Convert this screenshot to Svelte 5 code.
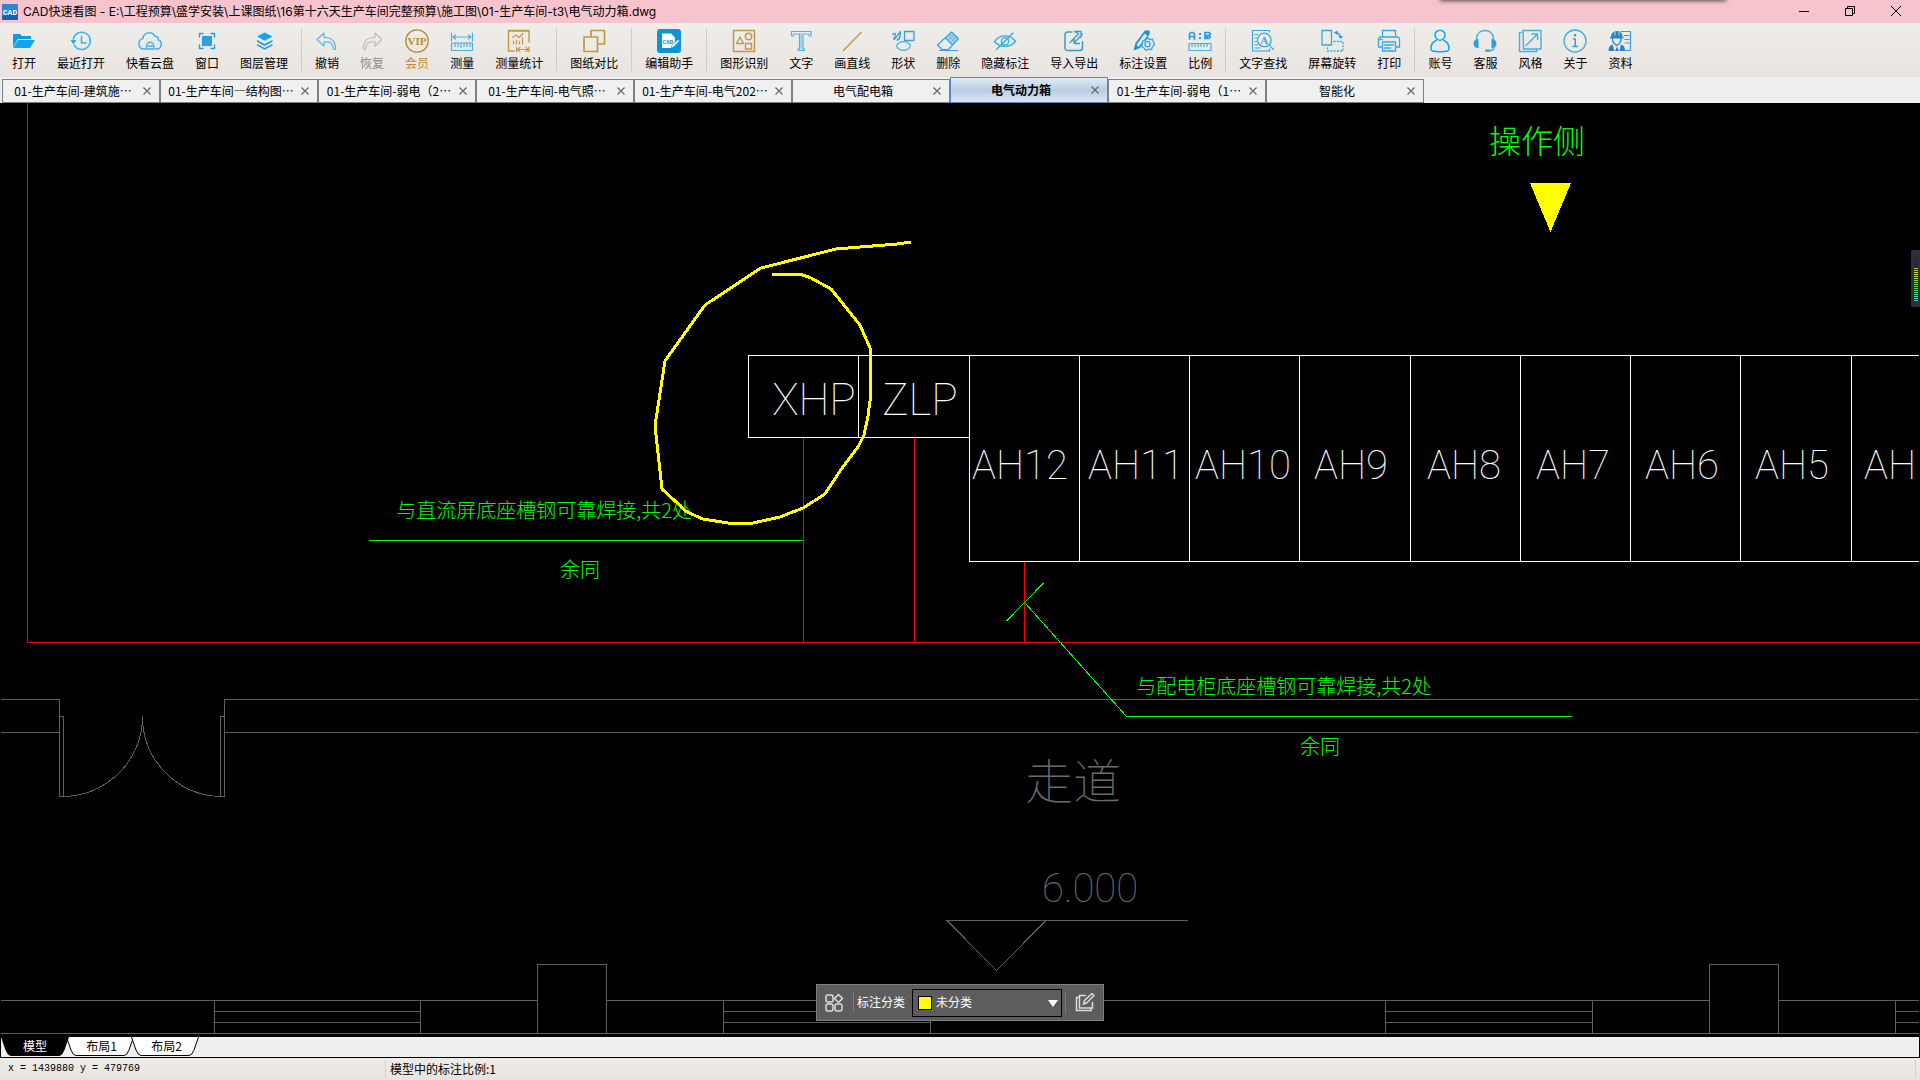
<script>
  const B = '#29abe2';
  const G = '#bf9a45';
  const stroke = (c, w, d) => `<path d="${d}" fill="none" stroke="${c}" stroke-width="${w}" stroke-linejoin="round" stroke-linecap="round"/>`;

  const icons = {
    open: `<path d="M1 5h7l2 2h9v3H6l-5 8z" fill="#0e9be0"/><path d="M6 11h17l-5 8H1z" fill="#12a5ee"/>`,
    recent: stroke('#3fb4ea', 1.6, 'M5.2 16.2A8.6 8.6 0 1 0 4.300 10') + stroke('#3fb4ea', 1.6, 'M12.500 7.500v6.500h4.500') + `<path d="M1.500 11h6l-3 4.500z" fill="${B}"/>`,
    cloud: stroke('#3db2ec', 1.5, 'M7.500 20H6a5.300 5.300 0 0 1-1.200-10.400C5 6 8 3.500 11.500 3.800c2.500.1 4.500 1.400 5.500 3.500 2 0 3.300 1.500 3.300 3.500 2 .7 3 2.200 3 4.200 0 3-2 5-4.500 5h-1.500') + stroke('#3db2ec', 1.4, 'M8.500 20v-3a3.700 3.700 0 0 1 7.400 0v3zM10 17h4.500'),
    window: stroke('#1ba3ea', 1.4, 'M4.500 8V4.500H8M16 4.500h3.500V8M19.500 16v3.500H16M8 19.500H4.500V16') + `<path d="M7.500 7.500h9v9h-9z" fill="#3a9fd6" stroke="#12a5ee"/>`,
    layers: `<path d="M12.500 3.500l8 4-8 4.300-7.500-4.300z" fill="#12a5ee"/><path d="M5 11l7.500 4 8-4v1.800l-8 4.200L5 12.800zM5 15l7.500 4 8-4v1.500l-8 4.200L5 16.500z" fill="#1b9ade"/>`,
    undo: stroke('#58b8e6', 1.200, 'M9 4L2 10.500 9 17v-4c6-.6 9 1 9.500 7.500h2c.6-8-4-12.300-11.500-12z'),
    redo: stroke('#bdbdbd', 1.200, 'M15 4l7 6.500L15 17v-4c-6-.6-9 1-9.500 7.500h-2C3 12.500 7.500 8.200 15 8.500z'),
    vip: `<circle cx="12" cy="12" r="11.200" fill="none" stroke="#b4893a" stroke-width="1.300"/><text x="12" y="16" text-anchor="middle" font-family="Liberation Serif, serif" font-size="11" font-weight="bold" fill="#c08a20">VIP</text>`,
    measure: stroke('#45b0e2', 1.200, 'M1.500 4v8M22.500 4v8M3 8h18M5.500 6L3 8l2.500 2M18.500 6L21 8l-2.500 2M1.500 14h21v7.500h-21zM5 14.500v3M8 14.500v3M11 14.500v4M14 14.500v3M17 14.500v3M20 14.500v3'),
    stats: stroke(G, 1.400, 'M22 13V1.500H1.500v20.500H7M22 2H1.500') + stroke(G, 1.200, 'M5.500 8.500l3.500-2.500 3 2.500 4-4M6.500 12v3M9.500 11v4M12.500 12v3M15.500 8.500V15M9.500 18v5M22 18v5M10.500 20.500h11M13 18.500l-2.500 2 2.500 2M19 18.500l2.500 2-2.500 2'),
    compare: stroke(G, 1.700, 'M9 8V1.500h13.500V15H16M2 8h13.500v14.500H2z'),
    assist: `<rect width="24" height="24" rx="3" fill="#0c93dc"/><path d="M5 4.500h9l4 4v4l-3 6.500H5z" fill="#fff"/><text x="10.800" y="14.500" text-anchor="middle" font-family="Liberation Mono, monospace" font-size="6" font-weight="bold" fill="#0c93dc">CAD</text><path d="M21 10.500l1.500 1.500-6 6-2.500 1 .9-2.500z" fill="#fff" stroke="#0c93dc" stroke-width=".6"/>`,
    shapesearch: stroke(G, 1.500, 'M1.500 1.500h21v21h-21z') + stroke(G, 1.400, 'M8 8l3.500 6.500h-7zM13.500 14.500h6v5.500h-6z') + `<circle cx="16.500" cy="7.500" r="3.200" fill="none" stroke="${G}" stroke-width="1.400"/>`,
    text: stroke('#4ab4e6', 1.200, 'M2.500 2.500h19.500v4.500h-1.500l-1-2h-5.500v15h1.500v1.500H9v-1.500h1.500V5H5L4 7H2.500z') + stroke('#8fd0ee', 1.600, 'M12.200 4.500v15'),
    line: stroke(G, 1.400, 'M3.500 21.500L21 3.500'),
    shapes: stroke('#3a9fd6', 1.300, 'M1.500 5.500C5 3 5 5 3.500 8s-.5 3.500 1.500.5L9 3M6 11c2 0 2.500-1 3-3.500l.5-5M13.500 2.500h9.500v9h-9.500z') + `<ellipse cx="12.500" cy="17" rx="6.700" ry="4.300" fill="none" stroke="#45b0e2" stroke-width="1.300"/>`,
    erase: `<path d="M15.500 3L22.500 9.500 17 16 9.500 9z" fill="#a9d6ec"/>` + stroke('#2fa6e2', 1.200, 'M15.500 3l7 6.500L12.500 20.500H6L1.500 16zM9.500 9l7 7M3.500 21.500h18') + stroke('#58b0d8', 0.7, 'M12.500 7l7 6M14 5l7 6M18 5.500l-6.500 6M20 8l-6 6'),
    hide: stroke('#35a8e0', 1.400, 'M1.500 12.500C7 5 17 5 22.500 12.500 17 19 7 19 1.500 12.500zM3.500 20.500L20 4') + `<circle cx="12" cy="12.300" r="3.600" fill="none" stroke="#35a8e0" stroke-width="1.300"/>`,
    exchange: stroke('#3a9ccc', 1.500, 'M10 3H5.500A2.500 2.500 0 0 0 3 5.500V19a2.500 2.500 0 0 0 2.500 2.500H18a2.500 2.500 0 0 0 2.500-2.500v-6.500') + stroke('#3a9ccc', 1.300, 'M8 13.500l8.500-8.500-4-2.500h6.500v6M20.500 5l-8.500 9v-4.500M12.500 14.500h5'),
    setting: `<path d="M14 1.500h4.500v4L9 19l-6.500 2.500L4.500 14z" fill="#1192e0"/><path d="M13.500 4.500l3 2L7.500 18l-2-2z" fill="#dcecf5"/><path d="M16.500 8.500l2 2 3-.2 1 3 1 2.200-2 2-1 3-3-.4-2.500 1.400-2-2.500-2.500-1.500 1-2.500 0-3 3-.4z" fill="#eeecea" stroke="#35a8e0" stroke-width="1.300"/><circle cx="16.500" cy="15.200" r="2.600" fill="none" stroke="#35a8e0" stroke-width="1.300"/>`,
    ratio: stroke('#22a0e6', 1.700, 'M1.500 10V5l1.500-1.500h2L6.500 5v5M1.500 7.500h5M17 3.500h4l1.500 1.300L21 6.500h-4M21 6.500l1.500 1.500L21 9.500h-4zM17 3.500v6') + `<path d="M11 4h2v2h-2zM11 8h2v2h-2z" fill="#22a0e6"/>` + stroke('#45b0e2', 1.200, 'M1 14.500h22v7H1zM4 15v2.500M7 15v2.500M10 15v2.500M13 15v2.500M16 15v2.500M19 15v2.500'),
    find: stroke('#35a8e0', 1.200, 'M18.500 3V1.500h-17v20.500h17V20M4 5.500h2.500M4 9h1.500M4 12.500h1.500M4 16h2.500M4 19h5M18 16l4.500 4.500') + `<circle cx="13.300" cy="11" r="6.800" fill="#eeecea" stroke="#35a8e0" stroke-width="1.300"/><text x="13.300" y="15" text-anchor="middle" font-family="Liberation Serif, serif" font-size="11" font-weight="bold" fill="#45a6d6">A</text>`,
    rotate: stroke('#35a8e0', 1.300, 'M2 1.500h9.500V16H2z') + `<path d="M13.500 12.500h9.500v9.500H7.500v-4" fill="none" stroke="#35a8e0" stroke-width="1.300" stroke-dasharray="2 1.300"/>` + stroke('#35a8e0', 1.300, 'M15 3.500c3 .3 5 1.500 5.500 4.500') + `<path d="M14 3.500l3.500-2v4.500zM18 7h5l-2 3z" fill="#22a0e6"/>`,
    print: stroke('#35a8e0', 1.300, 'M5.500 8V1.500h13V8M5.500 18H1.500V9.500L3 8h18l1.500 1.500V18h-4M5.500 13h13v9h-13zM7.500 16h9M7.500 19h6M3 10.500h2'),
    account: `<circle cx="12" cy="6.200" r="5" fill="none" stroke="#0fa9f5" stroke-width="1.600"/>` + stroke('#0fa9f5', 1.600, 'M8 11.500c-3.500 1.500-5 4.500-5 8 0 2.500 1.500 3.300 9 3.300s9-.8 9-3.300c0-3.500-1.500-6.500-5-8'),
    service: stroke('#45aede', 1.500, 'M3.500 12V9.500C4 4.500 7.500 1.500 12 1.500s8 3 8.500 8V12M21 19c-.5 2-2 2.700-5 2.800') + `<path d="M5.500 10v9.500C2 19 .5 17 .5 14.500S2 10.500 5.500 10zM18.500 10v9.500c3.500-.5 5-2.500 5-5s-1.500-4-5-4.500z" fill="#2d9fdc"/><rect x="12" y="20.500" width="5" height="2.200" rx="1" fill="#2d9fdc"/>`,
    style: stroke('#45aede', 1.400, 'M3 3.500H1.500v19h17V21M5 1.500h18v18.500H5.500zM8 16.500L18.500 6M14 5h5.500v5.500'),
    about: `<circle cx="12" cy="12" r="11" fill="none" stroke="#45aede" stroke-width="1.300"/><circle cx="12" cy="6.300" r="1.200" fill="#2d9fdc"/>` + stroke('#2d9fdc', 1.400, 'M10.500 10h1.800v7.500M10 17.500h4.500'),
    docs: stroke('#3f9ada', 1.200, 'M13 2.500h9.500v19H16M16 6.500h5M17 10.500h4M17 14h4') + `<path d="M3 8c0-3.500 2-5.500 5-6h2c3 .5 4.500 2.500 4.500 6z" fill="#1c86d8"/><path d="M2 8h13.500v1.500H2z" fill="#1c86d8"/>` + stroke('#1c86d8', 1.300, 'M4.500 10c0 3.500 1.800 5 4.300 6.500 2.500-1.500 4.200-3 4.200-6.500') + `<path d="M.5 22c0-4 2-6 4-6.500l2 6.500zM9 17.500l2 4.500H7zM17 22c0-4-1.500-6-4-6.500L11.500 22z" fill="#2c7ccc"/><path d="M7 2.500v4M11 2.500v4" stroke="#eeecea" stroke-width=".8"/>`
  };

  const groups = [
    [['open', '打开'], ['recent', '最近打开'], ['cloud', '快看云盘'], ['window', '窗口'], ['layers', '图层管理']],
    [['undo', '撤销'], ['redo', '恢复'], ['vip', '会员'], ['measure', '测量'], ['stats', '测量统计']],
    [['compare', '图纸对比']],
    [['assist', '编辑助手']],
    [['shapesearch', '图形识别'], ['text', '文字'], ['line', '画直线'], ['shapes', '形状'], ['erase', '删除'], ['hide', '隐藏标注'], ['exchange', '导入导出'], ['setting', '标注设置'], ['ratio', '比例']],
    [['find', '文字查找'], ['rotate', '屏幕旋转'], ['print', '打印']],
    [['account', '账号'], ['service', '客服'], ['style', '风格'], ['about', '关于'], ['docs', '资料']]
  ];

  const files = ['01-生产车间-建筑施…', '01-生产车间—结构图…', '01-生产车间-弱电（2…', '01-生产车间-电气照…', '01-生产车间-电气202…', '电气配电箱', '电气动力箱', '01-生产车间-弱电（1…', '智能化'];
  let active = $state(6);

  const layouts = ['模型', '布局1', '布局2'];
  let layout = $state(0);

  const dividers = [1079, 1189, 1299, 1410, 1520, 1630, 1740, 1851];
  const cabinets = [['AH12', 1020], ['AH11', 1136], ['AH10', 1243], ['AH9', 1351], ['AH8', 1464], ['AH7', 1573], ['AH6', 1682], ['AH5', 1792], ['AH', 1890]];
  const openings = [[214, 420], [723, 930], [1385, 1592], [1895, 1919]];
  const levels = Array.from({ length: 23 }, (_, i) => (i < 6 ? '#20232d' : `hsl(${40 + (i - 6) * 8} 65% 55%)`));
</script>

<div class="app" lang="zh-CN">
  <header class="titlebar">
    <svg class="logo" viewBox="0 0 16 16" aria-hidden="true">
      <rect width="16" height="16" rx="1" fill="#1563b4" />
      <path d="M0 0h16v6L0 12z" fill="#2c86d2" />
      <text x="8" y="11" text-anchor="middle" font-family="Liberation Mono, monospace" font-size="8" font-weight="bold" fill="#fff">CAD</text>
    </svg>
    <h1>CAD快速看图 - E:\工程预算\盛学安装\上课图纸\16第十六天生产车间完整预算\施工图\01-生产车间-t3\电气动力箱.dwg</h1>
    <div class="window-buttons">
      <button aria-label="最小化"><svg viewBox="0 0 10 10"><path d="M0 5.500h10" /></svg></button>
      <button aria-label="还原"><svg viewBox="0 0 10 10"><path d="M.5 2.500h7v7h-7zM2.500 2.500v-2h7v7h-2" /></svg></button>
      <button aria-label="关闭"><svg viewBox="0 0 10 10"><path d="M0 0l10 10M10 0L0 10" /></svg></button>
    </div>
    <span class="notch"></span>
  </header>

  <nav class="toolbar">
    {#each groups as group, g}
      {#if g > 0}<span class="sep"></span>{/if}
      {#each group as [name, label]}
        <button class="tool {name}">
          <svg viewBox="0 0 24 24" aria-hidden="true">{@html icons[name]}</svg>
          <span>{label}</span>
        </button>
      {/each}
    {/each}
  </nav>

  <div class="files">
    {#each files as name, i}
      <div class="file" class:active={i === active}>
        <button class="name" onclick={() => (active = i)}>{name}</button>
        <button class="close" aria-label="关闭 {name}"><svg viewBox="0 0 8 8"><path d="M.5.5l7 7M7.500.5l-7 7" /></svg></button>
      </div>
    {/each}
  </div>

  <main class="canvas">
    <svg class="drawing" viewBox="0 103 1920 934" preserveAspectRatio="xMinYMin slice">
      <g class="wall">
        <path d="M1 699.500H59.500V796.500H70M1 732.500H59M60 716.500H63.500V796M1919 699.500H224.500V796.500H215M225 732.500H1919M224 716.500H220.500V796" />
        <path d="M142.500 716A80 80 0 0 1 63.500 796.500M142.500 716A80 80 0 0 0 220.500 796.500" />
        <path d="M1 1000.500H537.500V964.500H606.500V1000.500H1709.500V964.500H1778.500V1000.500H1919M537.500 1000V1033M606.500 1000V1033M1709.500 1000V1033M1778.500 1000V1033M1 1033.500H1919" />
        {#each openings as [a, b]}
          <path d="M{a}.5 1000V1033M{a} 1011.500H{b}M{a} 1022.500H{b}" />
          {#if b < 1919}<path d="M{b}.5 1000V1033" />{/if}
        {/each}
        <path d="M946 920.500H1188M947 920.500L996.500 970.500L1046 920.500" />
      </g>
      <g class="wall-text">
        <text class="room" x="1073" y="799">走道</text>
        <text class="level" x="1090" y="902">6.000</text>
      </g>
      <g class="outline">
        <path d="M1919 355.500H748.500V437.500H969.500M858.500 355V437M969.500 355V561.500H1919" />
        {#each dividers as x}
          <path d="M{x}.5 355V561" />
        {/each}
      </g>
      <g class="cabinet">
        <text class="panel" x="814" y="415">XHP</text>
        <text class="panel" x="920" y="415">ZLP</text>
        {#each cabinets as [label, x]}
          <text {x} y="479">{label}</text>
        {/each}
      </g>
      <path class="earth" d="M27.500 103V642.500H1919M803.500 438V642M914.500 438V642M1024.500 562V642" />
      <path class="leader" d="M369 540.500H803M1043.500 583L1006.500 621M1024.500 602.500L1126.500 716.500H1572" />
      <g class="note">
        <text x="544" y="518">与直流屏底座槽钢可靠焊接,共2处</text>
        <text x="580" y="577">余同</text>
        <text x="1284" y="694">与配电柜底座槽钢可靠焊接,共2处</text>
        <text x="1320" y="754">余同</text>
        <text class="side" x="1537" y="153">操作侧</text>
      </g>
      <path class="marker" d="M1530 183H1571L1550.500 232z" />
      <path class="sketch" d="M911 242L897 244L836 249L761 268L705 305L665 361L655 426L662 489L687 512L703 519L728 523L753 523L780 517L803 508L825 494L840 471L858 447L864 435L868 416L870 401V348L860 325L831 289L811 278L800 274H772" />
    </svg>

    <div class="meter" aria-hidden="true">
      {#each levels as color}<i style:background={color}></i>{/each}
    </div>

    <div class="annotate">
      <button class="grid" aria-label="全部分类">
        <svg viewBox="0 0 20 20"><rect x="2" y="2" width="7" height="7" rx="2" /><path d="M14.500 1.500l4 4-4 4-4-4z" /><rect x="2" y="11" width="7" height="7" rx="2" /><rect x="11" y="11" width="7" height="7" rx="2" /></svg>
      </button>
      <span class="bar"></span>
      <label for="category">标注分类</label>
      <div class="picker">
        <span class="swatch"></span>
        <select id="category"><option>未分类</option></select>
        <span class="arrow"></span>
      </div>
      <span class="bar"></span>
      <button class="edit" aria-label="编辑">
        <svg viewBox="0 0 20 20"><path d="M4 4.500H1.500v13H16V15M11 2.500H4.500V15h13V9M8.500 11l1-3.500 7.500-7 2 2-7.500 7.500z" /></svg>
      </button>
    </div>
  </main>

  <div class="layouts">
    {#each layouts as name, i}
      <button class="layout" class:current={i === layout} onclick={() => (layout = i)}>
        <svg viewBox="0 0 68 19" aria-hidden="true"><path d="M.5 0L5 13Q7 18.500 10 18.500H58Q61 18.500 63 13L67.500 0" /></svg>
        <span>{name}</span>
      </button>
    {/each}
  </div>

  <footer class="status">
    <span class="coords">x = 1439880 y = 479769</span>
    <span class="scale">模型中的标注比例:1</span>
  </footer>
</div>

<style>
  :global(body) { margin: 0; background: #000; }
  .app {
    display: flex;
    flex-direction: column;
    height: 100vh;
    overflow: hidden;
    font-family: "Noto Sans CJK SC", sans-serif;
    font-size: 12px;
    line-height: 14px;
    color: #000;
  }
  button {
    border: 0;
    padding: 0;
    margin: 0;
    background: none;
    font: inherit;
    color: inherit;
  }
  svg { display: block; }

  .titlebar {
    position: relative;
    display: flex;
    align-items: center;
    height: 23px;
    flex: none;
    background: #f7c4cd;
    padding: 0 1px 0 2px;
  }
  .logo { width: 16px; height: 16px; margin-right: 5px; }
  h1 {
    flex: 1;
    margin: 0;
    font-family: Inter, "Noto Sans CJK SC", sans-serif;
    font-size: 12px;
    font-weight: 400;
    white-space: nowrap;
  }
  .window-buttons { display: flex; align-self: stretch; }
  .window-buttons button {
    width: 46px;
    height: 21px;
    display: grid;
    place-items: center;
  }
  .window-buttons svg { width: 10px; height: 10px; fill: none; stroke: #000; overflow: visible; }
  .notch {
    position: absolute;
    top: -4px;
    right: 195px;
    width: 284px;
    height: 4px;
    background: #998;
    box-shadow: 0 0 4px 1px #604850;
  }

  .toolbar {
    display: flex;
    flex: none;
    gap: 1px;
    height: 54px;
    padding-left: 2px;
    background: linear-gradient(#efeeea, #e9e3e0);
  }
  .tool {
    display: flex;
    flex-direction: column;
    align-items: center;
    gap: 3px;
    padding: 6px 10px 0;
    white-space: nowrap;
  }
  .tool svg { width: 24px; height: 24px; }
  .tool.redo { color: #8c8c8c; }
  .tool.vip { color: #bf8c30; }
  .sep { width: 1px; height: 44px; margin: 5px 2px; background: #cdcdcb; }

  .files {
    display: flex;
    align-items: flex-end;
    flex: none;
    height: 26px;
    padding-left: 2px;
    background: #efefef;
  }
  .file {
    display: flex;
    align-items: center;
    box-sizing: border-box;
    width: 158px;
    height: 24px;
    padding: 0 5px 0 3px;
    border: 1px solid #7f7f7f;
    background: #f0f0f0;
  }
  .file.active {
    height: 26px;
    border-color: #5b87bf;
    background: linear-gradient(#e2ebf6, #b9cde4 50%, #dbe6f3);
    font-weight: 700;
  }
  .name { flex: 1; min-width: 0; white-space: nowrap; }
  .close { width: 14px; height: 14px; display: grid; place-items: center; }
  .close svg { width: 8px; height: 8px; fill: none; stroke: #666; stroke-width: 1.200; }

  .canvas {
    position: relative;
    flex: 1;
    min-height: 0;
    background: #000;
    overflow: hidden;
  }
  .drawing { width: 100%; height: 100%; shape-rendering: crispEdges; }
  .drawing path { fill: none; stroke-width: 1; }
  .drawing text { text-anchor: middle; }
  .wall { stroke: #606060; }
  .wall-text { fill: #6c6c6c; font-weight: 100; }
  .room { font-size: 48px; }
  .level { font-family: "Liberation Sans Narrow", Roboto, sans-serif; font-size: 40px; }
  .outline { stroke: #fff; }
  .cabinet { fill: #fff; font-family: Roboto, sans-serif; font-size: 40px; font-weight: 100; }
  .panel { font-size: 44px; }
  .drawing .earth { stroke: #f00; }
  .drawing .leader { stroke: #0f0; }
  .note { fill: #0f0; font-size: 20px; font-weight: 300; }
  .side { font-size: 32px; }
  .drawing .marker { fill: #ff0; }
  .drawing .sketch { stroke: #ff0; stroke-width: 3; }

  .meter {
    position: absolute;
    top: 147px;
    right: 0;
    box-sizing: border-box;
    width: 9px;
    height: 57px;
    padding: 6px 2px 6px 3px;
    display: flex;
    flex-direction: column;
    gap: 1px;
    border-radius: 2px 0 0 2px;
    background: #2b303f;
  }
  .meter i { height: 1px; }

  .annotate {
    position: absolute;
    bottom: 16px;
    left: 50%;
    transform: translateX(-50%);
    box-sizing: border-box;
    display: flex;
    align-items: center;
    width: 288px;
    height: 37px;
    padding: 0 8px 0 7px;
    border: 1px solid #808080;
    background: #5d5d5d;
    color: #fff;
  }
  .annotate button svg { width: 20px; height: 20px; fill: none; stroke: #dcdcdc; stroke-width: 1.500; }
  .bar { width: 1px; height: 21px; background: #7c7c7c; }
  .grid { margin-right: 9px; }
  .edit { margin-left: 9px; }
  .annotate label { margin: 0 7px 0 3px; padding-bottom: 2px; white-space: nowrap; }
  .picker {
    position: relative;
    flex: 1;
    height: 26px;
    margin-right: 3px;
    border: 1px solid #000;
  }
  .picker select {
    display: block;
    width: 100%;
    height: 100%;
    padding: 0 0 2px 23px;
    border: 0;
    background: none;
    appearance: none;
    font: inherit;
    color: inherit;
  }
  .swatch {
    position: absolute;
    top: 6px;
    left: 5px;
    width: 12px;
    height: 12px;
    border: 1px solid #000;
    background: #ff0;
  }
  .arrow {
    position: absolute;
    top: 10px;
    right: 3px;
    border: 5px solid transparent;
    border-top: 7px solid #fff;
    border-bottom: 0;
    pointer-events: none;
  }

  .layouts {
    display: flex;
    flex: none;
    height: 20px;
    box-sizing: border-box;
    height: 21px;
    border: solid #000;
    border-width: 0 1px 1px;
    background: #efefef;
  }
  .layout {
    position: relative;
    width: 68px;
    height: 19px;
    margin-right: -3px;
  }
  .layout svg { position: absolute; inset: 0; width: 68px; height: 19px; fill: #fff; stroke: #000; }
  .layout span { position: relative; display: block; padding: 0 0 2px 3px; }
  .layout.current { z-index: 1; color: #fff; }
  .layout.current span { padding-left: 0; }
  .layout.current svg { fill: #000; }

  .status {
    display: flex;
    flex: none;
    align-items: center;
    height: 22px;
    padding: 0 4px 0 8px;
    background: linear-gradient(#edece8, #e9e3e0);
  }
  .coords { width: 377px; font-family: "Liberation Mono", monospace; font-size: 10px; }
  .scale {
    flex: 1;
    padding: 2px 4px;
    border: solid #d2cfcc;
    border-width: 0 1px;
  }
</style>
